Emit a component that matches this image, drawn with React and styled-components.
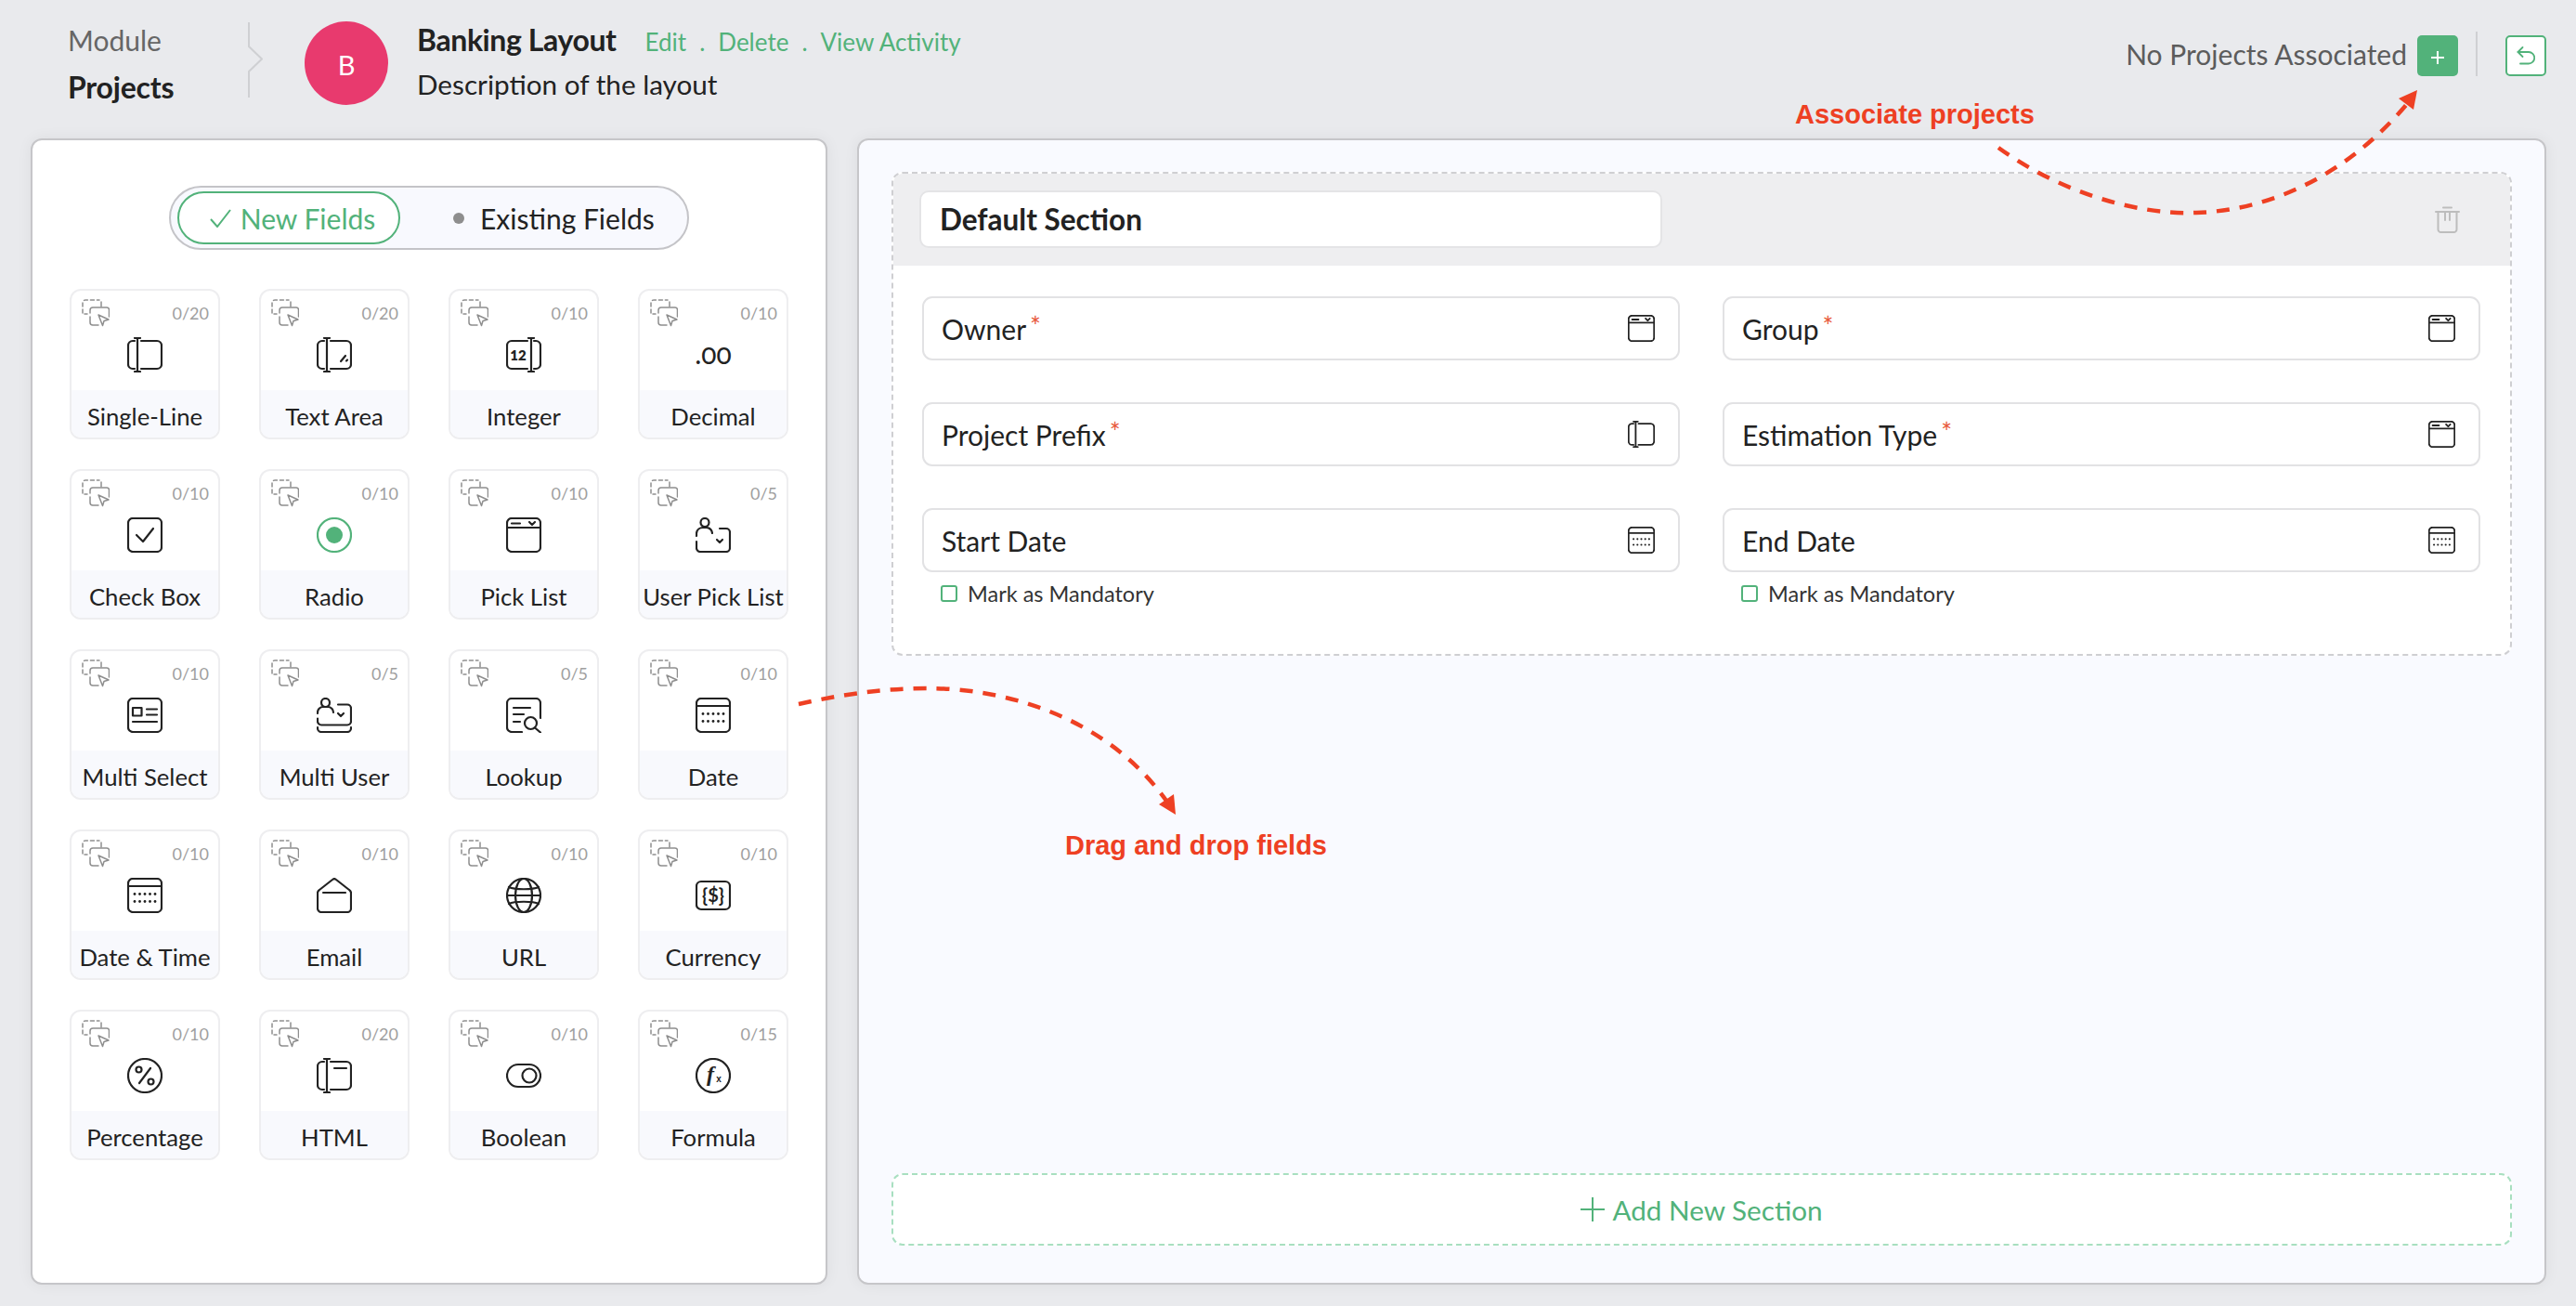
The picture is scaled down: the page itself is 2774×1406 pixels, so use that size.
import React from 'react';
import styled, { createGlobalStyle } from 'styled-components';

const GREEN = '#52b27a';
const RED = '#ee4023';

const Global = createGlobalStyle`
  html, body {
    margin: 0;
    padding: 0;
    background: #e9eaed;
    font-family: Lato, "Noto Sans", sans-serif;
    color: #222;
  }
  * { box-sizing: border-box; }
`;

const Page = styled.div`
  position: relative;
  width: 2774px;
  height: 1406px;
  overflow: hidden;
  background: #e9eaed;
`;

const Header = styled.header`
  display: flex;
  height: 149px;
  padding: 24px 32px 0 73px;
`;

const Crumbs = styled.div`
  width: 194px;
  font-size: 30px;
  line-height: 36px;
  color: #666;
  padding-top: 1px;
`;

const CrumbActive = styled.div`
  font-size: 32px;
  font-weight: 700;
  letter-spacing: -0.2px;
  color: #222;
  margin-top: 15px;
`;

const Separator = styled.svg`
  flex: none;
`;

const Avatar = styled.div`
  flex: none;
  width: 90px;
  height: 90px;
  margin: -1px 31px 0 45px;
  padding-top: 3px;
  border-radius: 50%;
  background: #e83a6e;
  color: #fff;
  font-size: 29px;
  display: flex;
  align-items: center;
  justify-content: center;
`;

const TitleRow = styled.div`
  display: flex;
  align-items: baseline;
  height: 38px;
`;

const Title = styled.h1`
  margin: 0 31px 0 0;
  font-size: 32px;
  line-height: 38px;
  font-weight: 700;
  letter-spacing: -0.4px;
  color: #222;
`;

const HeaderLink = styled.a`
  font-size: 26px;
  color: ${GREEN};
`;

const LinkDot = styled.span`
  font-size: 26px;
  color: ${GREEN};
  margin: 0 14px;
`;

const Description = styled.div`
  font-size: 29.700px;
  line-height: 38px;
  margin-top: 10px;
`;

const HeaderRight = styled.div`
  margin-left: auto;
  padding-top: 14px;
  display: flex;
  align-items: flex-start;
`;

const AssocText = styled.span`
  font-size: 30px;
  line-height: 44px;
  color: #5c5c5c;
  margin: -2px 11px 0 0;
`;

const AddButton = styled.button`
  width: 44px;
  height: 44px;
  padding: 4px 0 0;
  border: 0;
  border-radius: 5px;
  background: ${GREEN};
  display: flex;
  align-items: center;
  justify-content: center;
`;

const Divider = styled.div`
  width: 2px;
  height: 48px;
  margin: -4px 30px 0 19px;
  background: #cfd0d3;
`;

const BackButton = styled.button`
  width: 44px;
  height: 44px;
  padding: 0;
  border: 2px solid ${GREEN};
  border-radius: 5px;
  background: #fff;
  display: flex;
  align-items: center;
  justify-content: center;
`;

const Main = styled.main`
  display: flex;
  gap: 32px;
  height: 1234px;
  padding: 0 32px 0 33px;
`;

const Panel = styled.section`
  border: 2px solid #c6c6c9;
  border-radius: 12px;
  box-shadow: 0 0 16px rgba(0, 0, 0, 0.06);
`;

const LeftPanel = styled(Panel)`
  flex: none;
  width: 858px;
  background: #fff;
  padding-top: 49px;
`;

const Toggle = styled.div`
  width: 560px;
  height: 69px;
  margin: 0 auto 42px;
  padding: 0 7px;
  display: flex;
  align-items: center;
  border: 2px solid #c4c4c8;
  border-radius: 35px;
  background: #f8f9fe;
`;

const ToggleActive = styled.div`
  width: 240px;
  height: 57px;
  display: flex;
  align-items: center;
  justify-content: center;
  gap: 10px;
  padding-left: 8px;
  border: 2px solid ${GREEN};
  border-radius: 29px;
  background: #fff;
  color: ${GREEN};
  font-size: 30px;
`;

const ToggleOther = styled.div`
  display: flex;
  align-items: center;
  gap: 17px;
  margin-left: 57px;
  font-size: 30px;
  color: #222;
`;

const ToggleDot = styled.span`
  width: 12px;
  height: 12px;
  border-radius: 50%;
  background: #8e8e8e;
`;

const Grid = styled.div`
  display: grid;
  grid-template-columns: repeat(4, 162px);
  grid-auto-rows: 162px;
  column-gap: 42px;
  row-gap: 32px;
  padding-left: 40px;
`;

const Card = styled.div`
  position: relative;
  display: flex;
  flex-direction: column;
  border: 2px solid #eeeef0;
  border-radius: 12px;
  overflow: hidden;
  background: #fff;
`;

const CardTop = styled.div`
  position: relative;
  flex: 1;
  display: flex;
  align-items: flex-end;
  justify-content: center;
  padding-bottom: 19px;
`;

const DragIcon = styled.svg`
  position: absolute;
  left: 11px;
  top: 9px;
`;

const Count = styled.span`
  position: absolute;
  right: 10px;
  top: 12px;
  font-size: 18px;
  line-height: 24px;
  color: #a0a0a0;
`;

const DecimalGlyph = styled.span`
  display: block;
  height: 38px;
  font-size: 30px;
  line-height: 35px;
  font-variant-numeric: oldstyle-nums;
  color: #222;
`;

const CardLabel = styled.div`
  height: 51px;
  flex: none;
  padding-top: 3px;
  background: #f8f9fd;
  font-size: 25.700px;
  line-height: 50px;
  text-align: center;
  white-space: nowrap;
  color: #222;
`;

const RightPanel = styled(Panel)`
  flex: 1;
  background: #f9faff;
  padding: 34px 35px 40px;
  display: flex;
  flex-direction: column;
  justify-content: space-between;
`;

const Section = styled.div`
  height: 521px;
  border: 2px dashed #cfcfd2;
  border-radius: 12px;
  background: #fff;
  overflow: hidden;
`;

const SectionHeader = styled.div`
  height: 99px;
  background: #eeeef0;
  padding: 18px 54px 0 28px;
  display: flex;
  justify-content: space-between;
`;

const SectionTitle = styled.div`
  width: 800px;
  height: 62px;
  padding-left: 20px;
  border: 2px solid #e4e4e6;
  border-radius: 10px;
  background: #fff;
  font-size: 31.500px;
  font-weight: 700;
  line-height: 58px;
  color: #222;
`;

const TrashIcon = styled.svg`
  margin-top: 17px;
`;

const Fields = styled.div`
  display: grid;
  grid-template-columns: 816px 816px;
  column-gap: 46px;
  row-gap: 45px;
  padding: 33px 31px 0;
`;

const Field = styled.div`
  height: 69px;
  padding: 0 25px 0 19px;
  display: flex;
  align-items: center;
  justify-content: space-between;
  border: 2px solid #e2e2e4;
  border-radius: 11px;
  background: #fff;
`;

const FieldName = styled.span`
  font-size: 30px;
  line-height: 36px;
  color: #222;
`;

const Star = styled.span`
  font-size: 28px;
  line-height: 0;
  color: #e8583a;
  margin-left: 4px;
  vertical-align: 4px;
`;

const Mandatory = styled.label`
  display: flex;
  align-items: center;
  gap: 11px;
  margin: 13px 0 0 20px;
  font-size: 23.500px;
  line-height: 20px;
  color: #333;
`;

const MandatoryBox = styled.span`
  width: 18px;
  height: 18px;
  border: 2px solid ${GREEN};
  border-radius: 3px;
  background: #fff;
`;

const AddSection = styled.div`
  height: 78px;
  display: flex;
  align-items: center;
  justify-content: center;
  gap: 8px;
  border: 2px dashed #a8dfc0;
  border-radius: 12px;
  background: #fff;
  color: ${GREEN};
  font-size: 29.700px;
`;

const Overlay = styled.svg`
  position: absolute;
  left: 0;
  top: 0;
  pointer-events: none;
`;

const Note = styled.div`
  position: absolute;
  left: ${(p) => p.$x}px;
  top: ${(p) => p.$y}px;
  font-family: "Liberation Sans", Arial, sans-serif;
  font-size: 29px;
  line-height: 36px;
  font-weight: 700;
  color: ${RED};
  white-space: nowrap;
`;

const FieldSvg = ({ size = 38, children, stroke = '#222', sw = 2.200 }) => (
  <svg
    width={size}
    height={size}
    viewBox="0 0 38 38"
    fill="none"
    stroke={stroke}
    strokeWidth={sw}
    strokeLinecap="round"
    strokeLinejoin="round"
  >
    {children}
  </svg>
);

const box = <rect x="1" y="1" width="36" height="36" rx="5" />;

const glyphs = {
  single: (
    <>
      <path d="M8 4H6a5 5 0 0 0-5 5v20a5 5 0 0 0 5 5h2" />
      <path d="M15 4h17a5 5 0 0 1 5 5v20a5 5 0 0 1-5 5H15" />
      <path d="M11 1v36M8 1h6M8 37h6" />
    </>
  ),
  area: (
    <>
      <path d="M8 4H6a5 5 0 0 0-5 5v20a5 5 0 0 0 5 5h2" />
      <path d="M15 4h17a5 5 0 0 1 5 5v20a5 5 0 0 1-5 5H15" />
      <path d="M11 1v36M8 1h6M8 37h6" />
      <path d="M26 26l5-6M32 25.500l1-1" />
    </>
  ),
  integer: (
    <>
      <path d="M23 4H6a5 5 0 0 0-5 5v20a5 5 0 0 0 5 5h17" />
      <path d="M30 4h2a5 5 0 0 1 5 5v20a5 5 0 0 1-5 5h-2" />
      <path d="M27 1v36M24 1h6M24 37h6" />
      <text x="13" y="25" fontSize="15" fontWeight="800" fontFamily="Lato" fill="#222" stroke="none" textAnchor="middle">12</text>
    </>
  ),
  check: (
    <>
      {box}
      <path d="M10 19l7 7 11-14" />
    </>
  ),
  radio: (
    <>
      <circle cx="19" cy="19" r="18" stroke={GREEN} />
      <circle cx="19" cy="19" r="9" fill={GREEN} stroke="none" />
    </>
  ),
  pick: (
    <>
      {box}
      <path d="M1 11h36" />
      <path d="M6 6.500h9" />
      <path d="M25 5l3 3 3-3" />
    </>
  ),
  user: (
    <>
      <circle cx="10" cy="5.500" r="4.500" />
      <path d="M1 20v-3a7 7 0 0 1 7-6h4a7 7 0 0 1 6 6" />
      <path d="M26 12h7a4 4 0 0 1 4 4v17a4 4 0 0 1-4 4H5a4 4 0 0 1-4-4v-7" />
      <path d="M23 24l3 3 3-3" />
    </>
  ),
  multiSelect: (
    <>
      {box}
      <rect x="6" y="11" width="9.500" height="8.500" />
      <path d="M21 12.500h11M21 18.500h11M6 26h26" />
    </>
  ),
  multiUser: (
    <>
      <circle cx="9.500" cy="5.500" r="4.500" />
      <path d="M1 17v-1a6 6 0 0 1 6-6h5a6 6 0 0 1 6 6" />
      <path d="M23 7.500h10a4 4 0 0 1 4 4v14a4 4 0 0 1-4 4H5a4 4 0 0 1-4-4v-3" />
      <path d="M23 17l3 3 3-3" />
      <path d="M1 32v1a4 4 0 0 0 4 4h28a4 4 0 0 0 4-4v-1" />
    </>
  ),
  lookup: (
    <>
      <path d="M17 37H6a5 5 0 0 1-5-5V6a5 5 0 0 1 5-5h26a5 5 0 0 1 5 5v16" />
      <path d="M8 11h18M8 18h11M8 26h7" />
      <circle cx="26.500" cy="27.500" r="6.500" />
      <path d="M31 32.500l6 5" />
    </>
  ),
  date: (
    <>
      {box}
      <path d="M1 9h36" />
      <g fill="#222" stroke="none">
        {[8, 13.500, 19, 24.500, 30].map((x) => (
          <React.Fragment key={x}>
            <circle cx={x} cy="17.500" r="1.400" />
            <circle cx={x} cy="25.500" r="1.400" />
          </React.Fragment>
        ))}
      </g>
    </>
  ),
  email: (
    <>
      <path d="M1 16a4 4 0 0 1 2-3L17 2a3 3 0 0 1 4 0l14 11a4 4 0 0 1 2 3v17a4 4 0 0 1-4 4H5a4 4 0 0 1-4-4z" />
      <path d="M7 16h24" />
    </>
  ),
  url: (
    <>
      <circle cx="19" cy="19" r="18" />
      <ellipse cx="19" cy="19" rx="9" ry="18" />
      <path d="M3 10c6 3 26 3 32 0M3 28c6-3 26-3 32 0M1 19h36" />
    </>
  ),
  currency: (
    <>
      <rect x="1" y="4" width="36" height="30" rx="5" />
      <text x="19" y="26" fontSize="20" fontWeight="700" fontFamily="Lato" fill="#222" stroke="none" textAnchor="middle">{'{$}'}</text>
    </>
  ),
  percent: (
    <>
      <circle cx="19" cy="19" r="18" />
      <path d="M13 27l12-16" />
      <circle cx="12.500" cy="12.500" r="3" />
      <circle cx="25.500" cy="25.500" r="3" />
    </>
  ),
  html: (
    <>
      <path d="M8 4H6a5 5 0 0 0-5 5v20a5 5 0 0 0 5 5h2" />
      <path d="M15 4h17a5 5 0 0 1 5 5v20a5 5 0 0 1-5 5H15" />
      <path d="M11 1v36M8 1h6M8 37h6" />
      <path d="M19 11h13" />
    </>
  ),
  boolean: (
    <>
      <rect x="1" y="7" width="36" height="24" rx="12" />
      <circle cx="25" cy="19" r="7.500" />
    </>
  ),
  formula: (
    <>
      <circle cx="19" cy="19" r="18" />
      <text x="16" y="25" fontSize="24" fontWeight="700" fontStyle="italic" fontFamily="Liberation Serif" fill="#222" stroke="none" textAnchor="middle">f</text>
      <text x="25" y="26" fontSize="10" fontWeight="700" fontFamily="Liberation Sans" fill="#222" stroke="none" textAnchor="middle">x</text>
    </>
  ),
};

const Drag = () => (
  <DragIcon width="30" height="30" viewBox="0 0 30 30" fill="none" stroke="#8e8e8e" strokeWidth="1.500" strokeLinecap="round" strokeLinejoin="round">
    <path d="M1 15V4a3 3 0 0 1 3-3h15" strokeDasharray="4 3" />
    <path d="M21 3v5M3 16h3" />
    <path d="M9 19v6a3 3 0 0 0 3 3h6" />
    <path d="M9 15v-3a3 3 0 0 1 3-3h15a2.500 2.500 0 0 1 2.500 2.500V19" />
    <path d="M18 17l11 5-5 1.500-1.500 5z" />
  </DragIcon>
);

const cards = [
  ['Single-Line', '0/20', 'single'],
  ['Text Area', '0/20', 'area'],
  ['Integer', '0/10', 'integer'],
  ['Decimal', '0/10', 'decimal'],
  ['Check Box', '0/10', 'check'],
  ['Radio', '0/10', 'radio'],
  ['Pick List', '0/10', 'pick'],
  ['User Pick List', '0/5', 'user'],
  ['Multi Select', '0/10', 'multiSelect'],
  ['Multi User', '0/5', 'multiUser'],
  ['Lookup', '0/5', 'lookup'],
  ['Date', '0/10', 'date'],
  ['Date & Time', '0/10', 'date'],
  ['Email', '0/10', 'email'],
  ['URL', '0/10', 'url'],
  ['Currency', '0/10', 'currency'],
  ['Percentage', '0/10', 'percent'],
  ['HTML', '0/20', 'html'],
  ['Boolean', '0/10', 'boolean'],
  ['Formula', '0/15', 'formula'],
];

const layoutFields = [
  { name: 'Owner', required: true, icon: 'pick' },
  { name: 'Group', required: true, icon: 'pick' },
  { name: 'Project Prefix', required: true, icon: 'single' },
  { name: 'Estimation Type', required: true, icon: 'pick' },
  { name: 'Start Date', icon: 'date', mandatory: true },
  { name: 'End Date', icon: 'date', mandatory: true },
];

export default function App() {
  return (
    <Page>
      <Global />
      <Header>
        <Crumbs>
          Module
          <CrumbActive>Projects</CrumbActive>
        </Crumbs>
        <Separator width="16" height="82" viewBox="0 0 16 82" fill="none" stroke="#cfd0d3" strokeWidth="2">
          <path d="M1 0v26l14 13.500L1 53v28" />
        </Separator>
        <Avatar>B</Avatar>
        <div>
          <TitleRow>
            <Title>Banking Layout</Title>
            <HeaderLink>Edit</HeaderLink>
            <LinkDot>.</LinkDot>
            <HeaderLink>Delete</HeaderLink>
            <LinkDot>.</LinkDot>
            <HeaderLink>View Activity</HeaderLink>
          </TitleRow>
          <Description>Description of the layout</Description>
        </div>
        <HeaderRight>
          <AssocText>No Projects Associated</AssocText>
          <AddButton>
            <svg width="14" height="14" viewBox="0 0 14 14" stroke="#fff" strokeWidth="2">
              <path d="M7 0v14M0 7h14" />
            </svg>
          </AddButton>
          <Divider />
          <BackButton>
            <svg width="20" height="20" viewBox="0 0 20 20" fill="none" stroke={GREEN} strokeWidth="1.800" strokeLinecap="round" strokeLinejoin="round">
              <path d="M6.500 1L1.500 6l5 5" />
              <path d="M1.500 6H13a5.500 5.500 0 0 1 0 12.500H4" />
            </svg>
          </BackButton>
        </HeaderRight>
      </Header>

      <Main>
        <LeftPanel>
          <Toggle>
            <ToggleActive>
              <svg width="23" height="20" viewBox="0 0 23 20" fill="none" stroke={GREEN} strokeWidth="2">
                <path d="M1 11l7 8L22 1" />
              </svg>
              New Fields
            </ToggleActive>
            <ToggleOther>
              <ToggleDot />
              Existing Fields
            </ToggleOther>
          </Toggle>
          <Grid>
            {cards.map(([label, count, icon]) => (
              <Card key={label}>
                <CardTop>
                  <Drag />
                  <Count>{count}</Count>
                  {icon === 'decimal' ? (
                    <DecimalGlyph>.00</DecimalGlyph>
                  ) : (
                    <FieldSvg>{glyphs[icon]}</FieldSvg>
                  )}
                </CardTop>
                <CardLabel>{label}</CardLabel>
              </Card>
            ))}
          </Grid>
        </LeftPanel>

        <RightPanel>
          <Section>
            <SectionHeader>
              <SectionTitle>Default Section</SectionTitle>
              <TrashIcon width="27" height="29" viewBox="0 0 27 29" fill="none" stroke="#bdbdbd" strokeWidth="2" strokeLinecap="round">
                <path d="M1 6h25M9 1.500h9" />
                <path d="M3.500 6v19a3 3 0 0 0 3 3h14a3 3 0 0 0 3-3V6" />
                <path d="M11 7v8M16 7v8" />
              </TrashIcon>
            </SectionHeader>
            <Fields>
              {layoutFields.map((f) => (
                <div key={f.name}>
                  <Field>
                    <FieldName>
                      {f.name}
                      {f.required && <Star>*</Star>}
                    </FieldName>
                    <FieldSvg size={29} sw={2.400}>{glyphs[f.icon]}</FieldSvg>
                  </Field>
                  {f.mandatory && (
                    <Mandatory>
                      <MandatoryBox />
                      Mark as Mandatory
                    </Mandatory>
                  )}
                </div>
              ))}
            </Fields>
          </Section>
          <AddSection>
            <svg width="26" height="26" viewBox="0 0 26 26" stroke={GREEN} strokeWidth="2">
              <path d="M13 0v26M0 13h26" />
            </svg>
            Add New Section
          </AddSection>
        </RightPanel>
      </Main>

      <Overlay width="2774" height="1406" viewBox="0 0 2774 1406" fill="none" stroke={RED} strokeWidth="4.500">
        <path d="M2152 159C2215 205 2300 232 2365 229C2450 226 2530 185 2592 112" strokeDasharray="14 11" />
        <polygon points="2603,97 2583,106 2599,118" fill={RED} stroke="none" />
        <path d="M860 758C905 748 950 741 999 741C1080 741 1190 770 1256 862" strokeDasharray="14 11" />
        <polygon points="1266,877 1248,866 1264,855" fill={RED} stroke="none" />
      </Overlay>
      <Note $x={1933} $y={105}>Associate projects</Note>
      <Note $x={1147} $y={892}>Drag and drop fields</Note>
    </Page>
  );
}
